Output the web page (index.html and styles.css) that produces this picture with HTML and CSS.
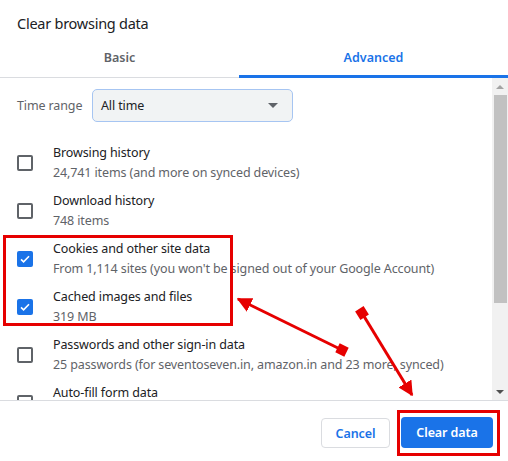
FILE: index.html
```html
<!DOCTYPE html>
<html>
<head>
<meta charset="utf-8">
<link rel="stylesheet" href="styles.css">
</head>
<body>
<div class="dialog">
  <h1 class="title">Clear browsing data</h1>
  <div class="tabs">
    <div class="tab tab-basic">Basic</div>
    <div class="tab tab-active">Advanced</div>
  </div>
  <div class="body">
    <div class="content">
      <div class="time-row">
        <span class="time-label">Time range</span>
        <div class="select">
          <span>All time</span>
          <span class="caret"></span>
        </div>
      </div>
      <div class="list">
        <div class="row">
          <span class="cb"></span>
          <div class="texts"><div class="t1">Browsing history</div><div class="t2">24,741 items (and more on synced devices)</div></div>
        </div>
        <div class="row">
          <span class="cb"></span>
          <div class="texts"><div class="t1">Download history</div><div class="t2">748 items</div></div>
        </div>
        <div class="row">
          <span class="cb checked"><svg viewBox="0 0 16 16" width="16" height="16"><path d="M4 8.3l2.6 2.5L12 5.3" fill="none" stroke="#fff" stroke-width="1.6"/></svg></span>
          <div class="texts"><div class="t1">Cookies and other site data</div><div class="t2">From 1,114 sites (you won't be signed out of your Google Account)</div></div>
        </div>
        <div class="row">
          <span class="cb checked"><svg viewBox="0 0 16 16" width="16" height="16"><path d="M4 8.3l2.6 2.5L12 5.3" fill="none" stroke="#fff" stroke-width="1.6"/></svg></span>
          <div class="texts"><div class="t1">Cached images and files</div><div class="t2">319 MB</div></div>
        </div>
        <div class="row">
          <span class="cb"></span>
          <div class="texts"><div class="t1">Passwords and other sign-in data</div><div class="t2">25 passwords (for seventoseven.in, amazon.in and 23 more, synced)</div></div>
        </div>
        <div class="row">
          <span class="cb"></span>
          <div class="texts"><div class="t1">Auto-fill form data</div><div class="t2">&nbsp;</div></div>
        </div>
      </div>
    </div>
    <div class="scrollbar">
      <div class="sb-btn"><span class="sb-up"></span></div>
      <div class="sb-track"><div class="sb-thumb"></div></div>
      <div class="sb-btn"><span class="sb-down"></span></div>
    </div>
  </div>
  <div class="footer">
    <button class="btn btn-cancel">Cancel</button>
    <button class="btn btn-primary">Clear data</button>
  </div>
</div>
<svg class="annot" width="508" height="461" viewBox="0 0 508 461">
  <defs>
    <marker id="head" viewBox="0 0 10 10" refX="9" refY="5" markerWidth="5" markerHeight="5" orient="auto">
      <path d="M0 0L10 5L0 10z" fill="#e60000"/>
    </marker>
  </defs>
  <rect x="4.5" y="236.5" width="227" height="88" fill="none" stroke="#e60000" stroke-width="3"/>
  <rect x="398.5" y="411.5" width="100" height="43" fill="none" stroke="#e60000" stroke-width="3"/>
  <line x1="342" y1="350" x2="238" y2="299" stroke="#e60000" stroke-width="3" marker-end="url(#head)"/>
  <rect x="337" y="345" width="10" height="10" fill="#e60000" transform="rotate(26 342 350)"/>
  <line x1="362" y1="313" x2="412" y2="395" stroke="#e60000" stroke-width="3" marker-end="url(#head)"/>
  <rect x="357" y="308" width="10" height="10" fill="#e60000" transform="rotate(58 362 313)"/>
</svg>
</body>
</html>
```
FILE: styles.css
```css
* { box-sizing: border-box; }
html, body {
  margin: 0;
  padding: 0;
  background: #fff;
}
body {
  width: 508px;
  height: 461px;
  overflow: hidden;
  position: relative;
  font-family: "Noto Sans", "Open Sans", sans-serif;
  color: #202124;
}
.dialog {
  display: flex;
  flex-direction: column;
  height: 461px;
}
.title {
  margin: 0;
  padding: 12px 17px 0;
  height: 38px;
  font-size: 14.5px;
  letter-spacing: -0.25px;
  font-weight: 400;
  line-height: 22px;
}
.tabs {
  display: flex;
  height: 40px;
  border-bottom: 1px solid #dadce0;
}
.tab {
  font-size: 12.5px;
  font-weight: 600;
  line-height: 39px;
  text-align: center;
  color: #5f6368;
}
.tab-basic { width: 239px; }
.tab-active {
  flex: 1;
  color: #1a73e8;
  border-bottom: 3px solid #1a73e8;
  margin-bottom: -1px;
}
.body {
  display: flex;
  height: 322px;
}
.content {
  flex: 1;
  overflow: hidden;
  padding: 11px 0 0 17px;
}
.time-row {
  display: flex;
  align-items: center;
  height: 33px;
}
.time-label {
  width: 75px;
  font-size: 12.5px;
  letter-spacing: -0.12px;
  color: #5f6368;
}
.select {
  width: 201px;
  height: 33px;
  border: 1px solid #a6c5f2;
  border-radius: 5px;
  background: #f1f3f4;
  display: flex;
  align-items: center;
  justify-content: space-between;
  padding: 0 14px 0 8px;
  font-size: 12.5px;
  letter-spacing: -0.12px;
  color: #202124;
}
.caret {
  width: 0;
  height: 0;
  border-left: 5px solid transparent;
  border-right: 5px solid transparent;
  border-top: 5px solid #5f6368;
}
.list {
  margin-top: 21px;
}
.row {
  display: flex;
  align-items: center;
  padding-bottom: 8px;
}
.cb {
  width: 16px;
  height: 16px;
  border: 2px solid #5f6368;
  border-radius: 2px;
  margin-right: 20px;
  flex: none;
  display: flex;
}
.cb.checked {
  border: none;
  background: #1a73e8;
}
.texts {
  font-size: 12.5px;
  letter-spacing: -0.12px;
  line-height: 20px;
}
.t1 { color: #202124; }
.t2 { color: #5f6368; white-space: nowrap; }
.scrollbar {
  width: 16px;
  background: #f1f1f1;
  display: flex;
  flex-direction: column;
}
.sb-btn {
  height: 17px;
  display: flex;
  align-items: center;
  justify-content: center;
}
.sb-up {
  border-left: 4px solid transparent;
  border-right: 4px solid transparent;
  border-bottom: 4px solid #a3a3a3;
}
.sb-down {
  border-left: 4px solid transparent;
  border-right: 4px solid transparent;
  border-top: 4px solid #505050;
}
.sb-track {
  flex: 1;
  padding: 0 1px 0 2px;
}
.sb-thumb {
  height: 208px;
  background: #c1c1c1;
}
.footer {
  border-top: 1px solid #dadce0;
  flex: 1;
  display: flex;
  justify-content: flex-end;
  align-items: flex-start;
  gap: 11px;
  padding: 16px 15px 0 0;
}
.btn {
  font-family: inherit;
  font-size: 12.5px;
  letter-spacing: -0.1px;
  font-weight: 600;
  border-radius: 4px;
  cursor: pointer;
}
.btn-cancel {
  margin-top: 1px;
  width: 69px;
  height: 30px;
  border: 1px solid #dadce0;
  background: #fff;
  color: #1a73e8;
}
.btn-primary {
  width: 92px;
  height: 31px;
  border: none;
  background: #1a73e8;
  color: #fff;
}
.annot {
  position: absolute;
  left: 0;
  top: 0;
  pointer-events: none;
}
```
